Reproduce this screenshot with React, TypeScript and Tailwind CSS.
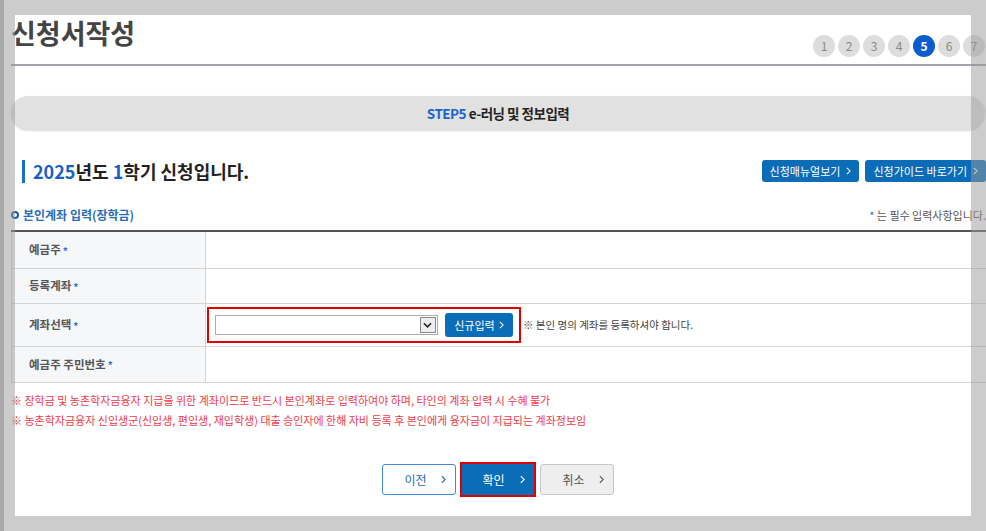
import React from 'react';

const font = { fontFamily: '"Noto Sans CJK KR", "Noto Sans", sans-serif' };

function Chevron({ className = '' }: { className?: string }) {
  return (
    <svg viewBox="0 0 6 10" className={className} fill="none" stroke="currentColor" strokeWidth="1.3">
      <path d="M1 1l4 4-4 4" />
    </svg>
  );
}

function Star() {
  return <span className="ml-[2px] text-[10px] text-[#2b6fd0]">*</span>;
}

const steps = [1, 2, 3, 4, 5, 6, 7];

const rows = [
  { label: '예금주', h: 'h-[37px]' },
  { label: '등록계좌', h: 'h-[35px]' },
  { label: '계좌선택', h: 'h-[43px]', select: true },
  { label: '예금주 주민번호', h: 'h-[36px]' },
];

export default function App() {
  return (
    <div className="relative h-[531px] w-[986px] overflow-hidden bg-white" style={font}>
      <div className="pl-[11px]">
        {/* header */}
        <div className="flex h-[66px] items-end justify-between border-b-2 border-[#a3a3ab]">
          <h1 className="self-start pt-[15px] text-[27px] font-bold leading-[36px] text-[#444]">
            신청서작성
          </h1>
          <div className="mb-[7px] mr-[1px] flex gap-[3px]">
            {steps.map((s) => (
              <div
                key={s}
                className={
                  s === 5
                    ? 'flex h-[22px] w-[22px] items-center justify-center rounded-full bg-[#0b5ccc] text-[12px] font-bold text-white'
                    : 'flex h-[22px] w-[22px] items-center justify-center rounded-full bg-[#dddddd] text-[12px] text-[#888]'
                }
              >
                {s}
              </div>
            ))}
          </div>
        </div>

        {/* step banner */}
        <div className="mt-[30px] mr-[1px] flex h-[34px] items-center justify-center rounded-full bg-[#e1e1e1] shadow-[0_1px_2px_rgba(0,0,0,0.15)]">
          <span className="text-[13.5px] font-bold tracking-[-0.5px] text-[#222]">
            <span className="text-[#1a63c9]">STEP5</span> e-러닝 및 정보입력
          </span>
        </div>

        {/* heading */}
        <div className="mt-[28px] flex items-center justify-between">
          <div className="flex items-center">
            <div className="ml-[11px] h-[23px] w-[3px] bg-[#1a6fc9]" />
            <h2 className="ml-[8px] text-[18px] font-bold leading-[26px] text-[#222]">
              <span className="text-[#1a5fc8]">2025</span>년도 <span className="text-[#1a5fc8]">1</span>학기 신청입니다.
            </h2>
          </div>
          <div className="flex gap-[6px]">
            <button className="flex h-[22px] items-center gap-[6px] rounded-[3px] bg-[#0b6cb7] px-[8px] text-[11px] text-white">
              신청매뉴얼보기 <Chevron className="h-[8px] w-[5px]" />
            </button>
            <button className="flex h-[22px] items-center gap-[6px] rounded-[3px] bg-[#0b6cb7] px-[8px] text-[11px] text-white">
              신청가이드 바로가기 <Chevron className="h-[8px] w-[5px]" />
            </button>
          </div>
        </div>

        {/* section title */}
        <div className="mt-[22px] flex items-center justify-between">
          <div className="flex items-center gap-[4px]">
            <span className="h-[8px] w-[8px] rounded-full border-2 border-[#1a5a9e]" />
            <span className="text-[12px] font-bold text-[#2a6db5]">본인계좌 입력(장학금)</span>
          </div>
          <span className="text-[11px] text-[#555]">
            <span className="text-[#2b6fd0]">*</span> 는 필수 입력사항입니다.
          </span>
        </div>

        {/* table */}
        <div className="mt-[6px] border-t-2 border-[#555]">
          {rows.map((r) => (
            <div key={r.label} className={`flex border-b border-[#d4d4d4] ${r.h}`}>
              <div className="flex w-[195px] shrink-0 items-center border-l border-r border-[#d4d4d4] bg-[#f6f7f9] pl-[17px] text-[11.5px] font-bold text-[#555]">
                {r.label}
                <Star />
              </div>
              <div className="flex flex-1 items-center pl-[1px]">
                {r.select && (
                  <>
                    <div className="flex h-[36px] w-[314px] items-center gap-[7px] border-2 border-[#e00000] px-[6px]">
                      <div className="flex h-[20px] w-[226px] items-center justify-end border border-[#aaa] bg-white pr-[1px]">
                        <div className="flex h-[16px] w-[16px] items-center justify-center border border-[#888] bg-[#eee]">
                          <svg viewBox="0 0 10 6" className="h-[6px] w-[9px]" fill="none" stroke="#222" strokeWidth="1.8">
                            <path d="M1 1l4 4 4-4" />
                          </svg>
                        </div>
                      </div>
                      <button className="flex h-[24px] w-[69px] items-center justify-center gap-[4px] rounded-[3px] bg-[#0b6cb7] text-[11px] text-white">
                        신규입력 <Chevron className="h-[8px] w-[5px]" />
                      </button>
                    </div>
                    <span className="ml-[2px] text-[10.5px] text-[#444]">※ 본인 명의 계좌를 등록하셔야 합니다.</span>
                  </>
                )}
              </div>
            </div>
          ))}
        </div>

        {/* notes */}
        <div className="mt-[10px] flex flex-col gap-[5px] text-[11px] leading-[15px] text-[#f03a4a]">
          <p>※ 장학금 및 농촌학자금융자 지급을 위한 계좌이므로 반드시 본인계좌로 입력하여야 하며, 타인의 계좌 입력 시 수혜 불가</p>
          <p>※ 농촌학자금융자 신입생군(신입생, 편입생, 재입학생) 대출 승인자에 한해 자비 등록 후 본인에게 융자금이 지급되는 계좌정보임</p>
        </div>

        {/* buttons */}
        <div className="mt-[34px] flex items-center justify-center gap-[4px] pr-[2px]">
          <button className="flex h-[31px] w-[74px] items-center justify-between rounded-[3px] border border-[#3d8ad4] bg-white pl-[22px] pr-[9px] text-[12px] text-[#2d66ad]">
            이전 <Chevron className="h-[9px] w-[5px]" />
          </button>
          <div className="border-2 border-[#e00000]">
            <button className="flex h-[31px] w-[72px] items-center justify-between bg-[#0b6cb7] pl-[21px] pr-[9px] text-[12px] text-white">
              확인 <Chevron className="h-[9px] w-[5px]" />
            </button>
          </div>
          <button className="flex h-[31px] w-[74px] items-center justify-between rounded-[3px] border border-[#c8c8c8] bg-[#eeeeee] pl-[22px] pr-[9px] text-[12px] text-[#555]">
            취소 <Chevron className="h-[9px] w-[5px]" />
          </button>
        </div>
      </div>

      {/* dimmed frame over the page */}
      <div className="absolute left-0 right-0 top-0 h-[15px] bg-[#999999]/50" />
      <div className="absolute bottom-0 left-0 right-0 h-[15px] bg-[#999999]/50" />
      <div className="absolute bottom-[15px] left-0 top-[15px] w-[15px] bg-[#999999]/50" />
      <div className="absolute bottom-0 left-0 top-0 w-[4px] bg-[#888888]/50" />
      <div className="absolute bottom-[15px] right-0 top-[15px] w-[15px] bg-[#999999]/50" />
    </div>
  );
}
